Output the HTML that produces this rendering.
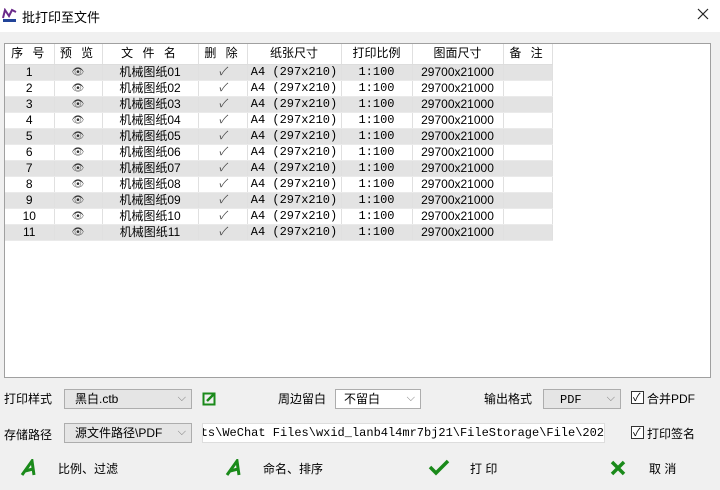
<!DOCTYPE html>
<html><head><meta charset="utf-8"><style>
*{margin:0;padding:0;box-sizing:border-box}
body{width:720px;height:490px;background:#f0f0f0;font-family:"Liberation Sans","Noto Sans CJK SC",sans-serif;font-size:12px;color:#000;position:relative;overflow:hidden}
.abs{position:absolute}
.title{left:0;top:0;width:720px;height:32px;background:#fff}
table{border-collapse:collapse;position:absolute;left:5px;top:44px;table-layout:fixed}
td,th{height:16px;font-weight:normal;text-align:center;border-right:1px solid #e0e0e0;border-bottom:1px solid #eaeaea;font-size:12px;line-height:15px;white-space:nowrap;padding:0}
th{height:20px;border-bottom:1px solid #ddd;letter-spacing:3px}
.mono{font-family:"Liberation Mono","Noto Sans CJK SC",monospace}
tr.g td{background:#e3e3e3}
.eye{font-size:10px;color:#333}
.ck{font-size:11px;color:#444;font-style:italic}
.combo{border:1px solid #adadad;background:#e5e5e5;height:20px;line-height:18px;padding-left:10px}
.combo:after{content:"⌵";position:absolute;right:5px;top:-1px;color:#777;font-size:11px}
.cb{width:13px;height:13px;border:1px solid #333;background:#fff}
</style></head><body>
<div class="abs title"></div>
<svg class="abs" style="left:2px;top:8px" width="16" height="14" viewBox="0 0 16 14"><path d="M1 10 L3 2 L7 8 L10 2 L14 4" stroke="#6a2a8a" stroke-width="2" fill="none"/><rect x="1" y="11" width="13" height="3" fill="#224499"/></svg>
<div class="abs" style="left:22px;top:7px;font-size:13px">批打印至文件</div>
<svg class="abs" style="left:697px;top:8px" width="12" height="12" viewBox="0 0 12 12"><path d="M1 1 L11 11 M11 1 L1 11" stroke="#222" stroke-width="1.2"/></svg>
<div class="abs" style="left:4px;top:43px;width:707px;height:335px;border:1px solid #a0a0a0;background:#fff"></div>
<table>
<colgroup><col style="width:49px"><col style="width:48px"><col style="width:96px"><col style="width:49px"><col style="width:94px"><col style="width:71px"><col style="width:91px"><col style="width:49px"></colgroup>
<tr><th>序 号</th><th>预 览</th><th>文 件 名</th><th>删 除</th><th style="letter-spacing:0">纸张尺寸</th><th style="letter-spacing:0">打印比例</th><th style="letter-spacing:0">图面尺寸</th><th>备 注</th></tr>
<tr class="g"><td>1</td><td class="eye">👁</td><td>机械图纸01</td><td class="ck">✓</td><td class="mono">A4 (297x210)</td><td class="mono">1:100</td><td>29700x21000</td><td></td></tr>
<tr><td>2</td><td class="eye">👁</td><td>机械图纸02</td><td class="ck">✓</td><td class="mono">A4 (297x210)</td><td class="mono">1:100</td><td>29700x21000</td><td></td></tr>
<tr class="g"><td>3</td><td class="eye">👁</td><td>机械图纸03</td><td class="ck">✓</td><td class="mono">A4 (297x210)</td><td class="mono">1:100</td><td>29700x21000</td><td></td></tr>
<tr><td>4</td><td class="eye">👁</td><td>机械图纸04</td><td class="ck">✓</td><td class="mono">A4 (297x210)</td><td class="mono">1:100</td><td>29700x21000</td><td></td></tr>
<tr class="g"><td>5</td><td class="eye">👁</td><td>机械图纸05</td><td class="ck">✓</td><td class="mono">A4 (297x210)</td><td class="mono">1:100</td><td>29700x21000</td><td></td></tr>
<tr><td>6</td><td class="eye">👁</td><td>机械图纸06</td><td class="ck">✓</td><td class="mono">A4 (297x210)</td><td class="mono">1:100</td><td>29700x21000</td><td></td></tr>
<tr class="g"><td>7</td><td class="eye">👁</td><td>机械图纸07</td><td class="ck">✓</td><td class="mono">A4 (297x210)</td><td class="mono">1:100</td><td>29700x21000</td><td></td></tr>
<tr><td>8</td><td class="eye">👁</td><td>机械图纸08</td><td class="ck">✓</td><td class="mono">A4 (297x210)</td><td class="mono">1:100</td><td>29700x21000</td><td></td></tr>
<tr class="g"><td>9</td><td class="eye">👁</td><td>机械图纸09</td><td class="ck">✓</td><td class="mono">A4 (297x210)</td><td class="mono">1:100</td><td>29700x21000</td><td></td></tr>
<tr><td>10</td><td class="eye">👁</td><td>机械图纸10</td><td class="ck">✓</td><td class="mono">A4 (297x210)</td><td class="mono">1:100</td><td>29700x21000</td><td></td></tr>
<tr class="g"><td>11</td><td class="eye">👁</td><td>机械图纸11</td><td class="ck">✓</td><td class="mono">A4 (297x210)</td><td class="mono">1:100</td><td>29700x21000</td><td></td></tr>
</table>
<div class="abs" style="left:4px;top:390px">打印样式</div>
<div class="abs combo" style="left:64px;top:389px;width:128px">黑白.ctb</div>
<svg class="abs" style="left:202px;top:391px" width="15" height="15" viewBox="0 0 15 15"><rect x="1.5" y="2.5" width="11" height="11" fill="none" stroke="#1a8a1a" stroke-width="2"/><path d="M5 10 L12 3" stroke="#1a8a1a" stroke-width="2.5"/></svg>
<div class="abs" style="left:278px;top:390px">周边留白</div>
<div class="abs combo" style="left:335px;top:389px;width:86px;background:#fff;padding-left:8px">不留白</div>
<div class="abs" style="left:484px;top:390px">输出格式</div>
<div class="abs combo" style="left:543px;top:389px;width:78px;padding-left:16px" ><span class="mono">PDF</span></div>
<div class="abs cb" style="left:631px;top:391px"><span style="position:absolute;left:1px;top:-3px;font-size:11px">✓</span></div>
<div class="abs" style="left:647px;top:390px">合并PDF</div>
<div class="abs" style="left:4px;top:426px">存储路径</div>
<div class="abs combo" style="left:64px;top:423px;width:128px">源文件路径\PDF</div>
<div class="abs mono" style="left:202px;top:423px;width:403px;height:20px;background:#fff;border:1px solid #ddd;overflow:hidden;white-space:nowrap;line-height:18px;font-size:12px;direction:rtl;text-align:left"><span style="direction:ltr;unicode-bidi:bidi-override">C:\Users\Documents\WeChat Files\wxid_lanb4l4mr7bj21\FileStorage\File\202</span></div>
<div class="abs cb" style="left:631px;top:426px"><span style="position:absolute;left:1px;top:-3px;font-size:11px">✓</span></div>
<div class="abs" style="left:647px;top:425px">打印签名</div>
<svg class="abs" style="left:20px;top:459px" width="18" height="18" viewBox="0 0 18 18"><path d="M2 16 L12 2 L14 16 M5 12 L13 10" stroke="#1a8a1a" stroke-width="3" fill="none"/></svg>
<div class="abs" style="left:58px;top:460px">比例、过滤</div>
<svg class="abs" style="left:225px;top:459px" width="18" height="18" viewBox="0 0 18 18"><path d="M2 16 L12 2 L14 16 M5 12 L13 10" stroke="#1a8a1a" stroke-width="3" fill="none"/></svg>
<div class="abs" style="left:263px;top:460px">命名、排序</div>
<svg class="abs" style="left:428px;top:458px" width="22" height="18" viewBox="0 0 22 18"><path d="M2 9 L8 15 L20 3" stroke="#1a8a1a" stroke-width="3.5" fill="none"/></svg>
<div class="abs" style="left:470px;top:460px">打 印</div>
<svg class="abs" style="left:610px;top:460px" width="16" height="16" viewBox="0 0 16 16"><path d="M2 2 L14 14 M14 2 L2 14" stroke="#1a8a1a" stroke-width="3.5"/></svg>
<div class="abs" style="left:649px;top:460px">取 消</div>
</body></html>
